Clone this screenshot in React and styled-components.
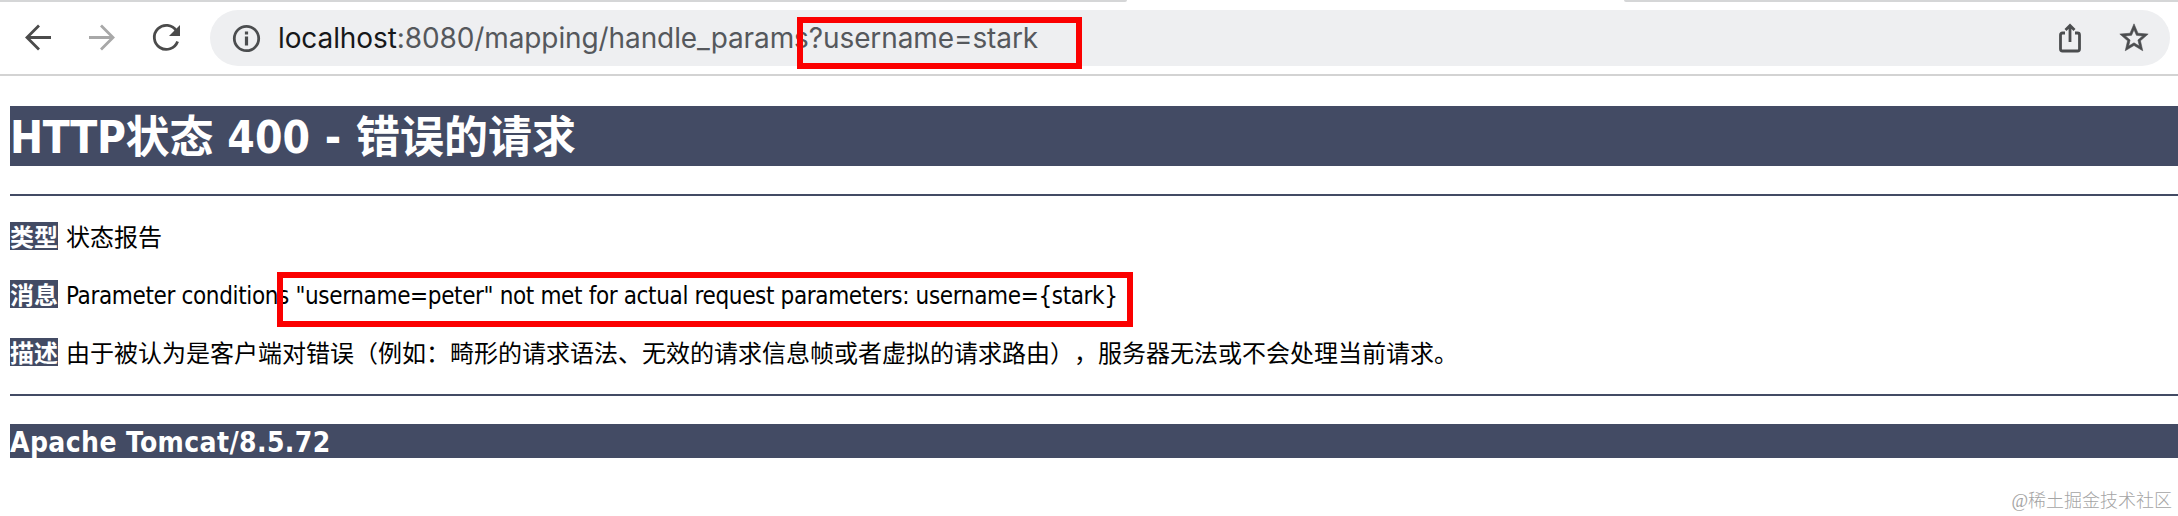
import styled, { createGlobalStyle } from "styled-components";

const GlobalStyle = createGlobalStyle`
  body {
    margin: 0;
    background: #fff;
    overflow: hidden;
  }
`;

const Page = styled.div`
  position: relative;
  width: 2178px;
  height: 516px;
  overflow: hidden;
  font-family: "DejaVu Sans Condensed", "Noto Sans CJK SC", sans-serif;
  text-spacing-trim: space-all;
`;

const TabStrip = styled.div`
  display: flex;
  justify-content: space-between;
  height: 2px;
`;

const TabEdge = styled.div`
  width: ${(props) => props.$width}px;
  background: #d5d6d7;
  border-radius: ${(props) => (props.$right ? "0 0 0 6px" : "0 0 6px 0")};
`;

const Toolbar = styled.div`
  display: flex;
  align-items: center;
  box-sizing: border-box;
  height: 74px;
  padding: 0 8px 0 22px;
  border-bottom: 2px solid #d3d3d3;
`;

const NavIcon = styled.svg`
  flex: none;
  width: 32px;
  height: 32px;
  margin-right: 32px;
  fill: none;
  stroke: ${(props) => (props.$muted ? "#a8a8a8" : "#4b4b4b")};
  stroke-width: 2.8;
`;

const AddressBar = styled.div`
  display: flex;
  align-items: center;
  flex: 1;
  height: 56px;
  box-sizing: border-box;
  margin-left: -4px;
  padding: 0 19px 0 20px;
  border-radius: 28px;
  background: #eeeff1;
`;

const BarIcon = styled.svg`
  flex: none;
  width: 32px;
  height: 32px;
  fill: none;
  stroke: #4b4d4f;
  stroke-width: 2.8;
`;

const StarIcon = styled.svg`
  flex: none;
  width: 34px;
  height: 34px;
  margin-left: 31px;
  fill: #4b4d4f;
  stroke: #4b4d4f;
  stroke-width: 0.4;
`;

const Url = styled.div`
  flex: 1;
  margin-left: 16px;
  font: 28px/34px Inter, sans-serif;
  letter-spacing: -0.1px;
  white-space: nowrap;
  color: #55585c;
`;

const Host = styled.span`
  color: #17181a;
`;

const Report = styled.main`
  padding: 30px 0 0 10px;
  color: #000;
`;

const Title = styled.h1`
  margin: 0;
  height: 60px;
  font-size: 44px;
  line-height: 63px;
  white-space: nowrap;
  color: #fff;
  background: #434b64;
`;

const Protocol = styled.span`
  letter-spacing: -0.4px;
`;

const Dash = styled.span`
  margin: 0 1px;
`;

const Rule = styled.hr`
  height: 2px;
  margin: 28px 0 ${(props) => props.$after}px;
  border: 0;
  background: #434b64;
`;

const Rows = styled.div`
  display: flex;
  flex-direction: column;
  gap: 30px;
`;

const Row = styled.p`
  display: flex;
  gap: 8px;
  height: 28px;
  margin: 0;
  font-size: 24px;
  line-height: 32px;
  white-space: nowrap;
`;

const Label = styled.b`
  width: 48px;
  color: #fff;
  background: #434b64;
`;

const Value = styled.span`
  letter-spacing: ${(props) => props.$spacing || 0}px;
`;

const Footer = styled.h3`
  margin: 0;
  height: 34px;
  font-size: 28px;
  line-height: 38px;
  letter-spacing: 0.4px;
  color: #fff;
  background: #434b64;
`;

const Marker = styled.div`
  position: absolute;
  left: ${(props) => props.$x}px;
  top: ${(props) => props.$y}px;
  width: ${(props) => props.$w}px;
  height: ${(props) => props.$h}px;
  box-sizing: border-box;
  border: 6px solid #fb0000;
`;

const Watermark = styled.div`
  position: absolute;
  right: 6px;
  bottom: 3px;
  font: 300 18px/24px "Liberation Serif", "Noto Sans CJK SC", sans-serif;
  color: #a4a4a4;
`;

const rows = [
  { label: "类型", text: "状态报告" },
  {
    label: "消息",
    text: 'Parameter conditions "username=peter" not met for actual request parameters: username={stark}',
    spacing: -0.36,
  },
  {
    label: "描述",
    text: "由于被认为是客户端对错误（例如：畸形的请求语法、无效的请求信息帧或者虚拟的请求路由），服务器无法或不会处理当前请求。",
  },
];

const App = () => {
  return (
    <Page>
      <GlobalStyle />
      <TabStrip>
        <TabEdge $width={1127} />
        <TabEdge $width={554} $right />
      </TabStrip>
      <Toolbar>
        <NavIcon viewBox="0 0 32 32">
          <path d="M29 15.500H5M17 3.500L5 15.500l12 12" />
        </NavIcon>
        <NavIcon viewBox="0 0 32 32" $muted>
          <path d="M3 15.500h24M15 3.500l12 12-12 12" />
        </NavIcon>
        <NavIcon viewBox="0 0 32 32">
          <path d="M26.500 9A12 12 0 1 0 27.600 19.500" />
          <path d="M30 3v11H19z" fill="#4b4b4b" stroke="none" />
        </NavIcon>
        <AddressBar>
          <BarIcon viewBox="0 0 32 32">
            <circle cx="16.500" cy="16.500" r="12.200" />
            <path d="M16.500 14.500v9M16.500 9.500v3" strokeWidth="3.200" />
          </BarIcon>
          <Url>
            <Host>localhost</Host>:8080/mapping/handle_params?username=stark
          </Url>
          <BarIcon viewBox="0 0 32 32">
            <path d="M11 11H8.500Q6.500 11 6.500 13v14Q6.500 29 8.500 29h15Q25.500 29 25.500 27V13Q25.500 11 23.500 11H21M16 20V4M11.500 8L16 3.500 20.500 8" />
          </BarIcon>
          <StarIcon viewBox="0 0 24 24">
            <path d="M22 9.240l-7.190-.620L12 2 9.190 8.630 2 9.240l5.460 4.730L5.820 21 12 17.270 18.180 21l-1.630-7.030L22 9.240zM12 15.400l-3.760 2.270 1-4.280-3.320-2.880 4.380-.380L12 6.100l1.710 4.040 4.380.380-3.320 2.880 1 4.280L12 15.400z" />
          </StarIcon>
        </AddressBar>
      </Toolbar>
      <Report>
        <Title>
          <Protocol>HTTP</Protocol>状态 400 <Dash>-</Dash> 错误的请求
        </Title>
        <Rule $after={26} />
        <Rows>
          {rows.map((row) => (
            <Row key={row.label}>
              <Label>{row.label}</Label>
              <Value $spacing={row.spacing}>{row.text}</Value>
            </Row>
          ))}
        </Rows>
        <Rule $after={28} />
        <Footer>Apache Tomcat/8.5.72</Footer>
      </Report>
      <Marker $x={797} $y={17} $w={285} $h={52} />
      <Marker $x={277} $y={272} $w={856} $h={55} />
      <Watermark>@稀土掘金技术社区</Watermark>
    </Page>
  );
};

export default App;
